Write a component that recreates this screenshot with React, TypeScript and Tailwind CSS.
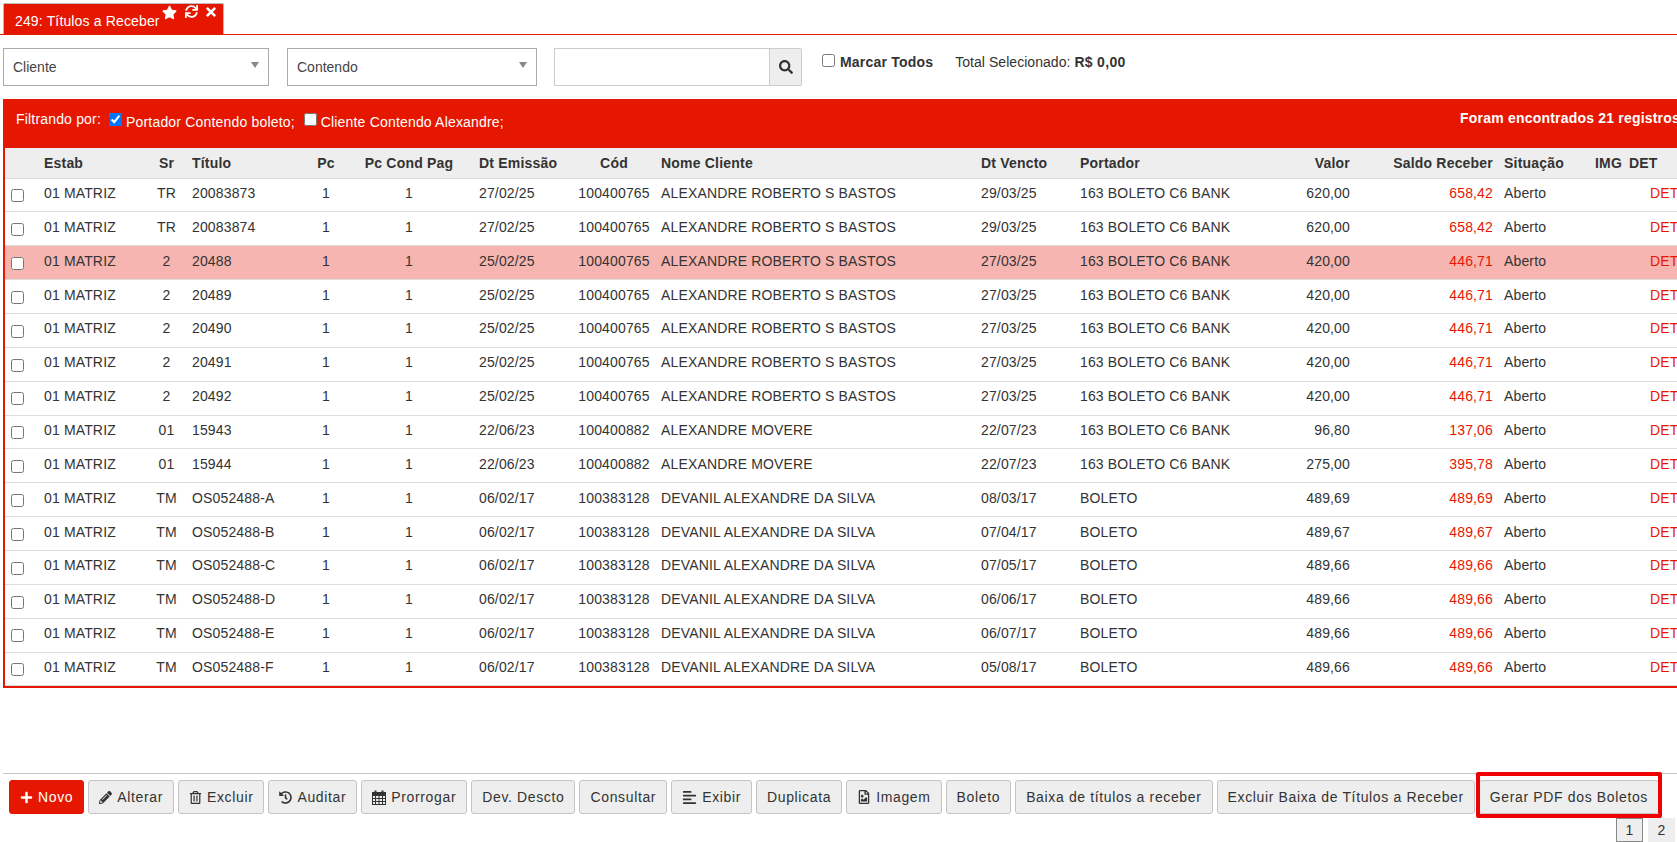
import { FaStar, FaSync, FaTimes, FaSearch, FaPlus, FaPencilAlt, FaRegTrashAlt, FaHistory, FaAlignLeft, FaRegFileImage } from "react-icons/fa"
import type { ReactNode } from "react"

const matriz = "01 MATRIZ"
const alex = "ALEXANDRE ROBERTO S BASTOS"
const dev = "DEVANIL ALEXANDRE DA SILVA"
const c6 = "163 BOLETO C6 BANK"

const rows = [
  ["TR", "20083873", "27/02/25", "100400765", alex, "29/03/25", c6, "620,00", "658,42"],
  ["TR", "20083874", "27/02/25", "100400765", alex, "29/03/25", c6, "620,00", "658,42"],
  ["2", "20488", "25/02/25", "100400765", alex, "27/03/25", c6, "420,00", "446,71"],
  ["2", "20489", "25/02/25", "100400765", alex, "27/03/25", c6, "420,00", "446,71"],
  ["2", "20490", "25/02/25", "100400765", alex, "27/03/25", c6, "420,00", "446,71"],
  ["2", "20491", "25/02/25", "100400765", alex, "27/03/25", c6, "420,00", "446,71"],
  ["2", "20492", "25/02/25", "100400765", alex, "27/03/25", c6, "420,00", "446,71"],
  ["01", "15943", "22/06/23", "100400882", "ALEXANDRE MOVERE", "22/07/23", c6, "96,80", "137,06"],
  ["01", "15944", "22/06/23", "100400882", "ALEXANDRE MOVERE", "22/07/23", c6, "275,00", "395,78"],
  ["TM", "OS052488-A", "06/02/17", "100383128", dev, "08/03/17", "BOLETO", "489,69", "489,69"],
  ["TM", "OS052488-B", "06/02/17", "100383128", dev, "07/04/17", "BOLETO", "489,67", "489,67"],
  ["TM", "OS052488-C", "06/02/17", "100383128", dev, "07/05/17", "BOLETO", "489,66", "489,66"],
  ["TM", "OS052488-D", "06/02/17", "100383128", dev, "06/06/17", "BOLETO", "489,66", "489,66"],
  ["TM", "OS052488-E", "06/02/17", "100383128", dev, "06/07/17", "BOLETO", "489,66", "489,66"],
  ["TM", "OS052488-F", "06/02/17", "100383128", dev, "05/08/17", "BOLETO", "489,66", "489,66"],
]

function Caret() {
  return <span className="w-0 h-0 border-l-[4px] border-r-[4px] border-t-[6px] border-l-transparent border-r-transparent border-t-[#888] mb-[4px]" />
}

// FontAwesome 4 style calendar, the react-icons one has no grid
function CalendarIcon() {
  return (
    <svg width="14" height="15" viewBox="0 0 14 15" fill="none" stroke="#333" strokeWidth="1">
      <rect x="0.5" y="2.5" width="13" height="12" fill="#eee" />
      <path d="M0.5 2.5h13v3h-13z" fill="#333" />
      <path d="M0.5 8.5h13M0.5 11.5h13M3.5 5.5v9M7 5.5v9M10.5 5.5v9" />
      <path d="M3.5 0.5v3M10.5 0.5v3" strokeWidth="2" />
    </svg>
  )
}

function Combo({ label, w }: { label: string; w: string }) {
  return (
    <div className={`${w} h-[38px] border border-[#aaa] bg-white flex items-center justify-between pl-[9px] pr-[9px] text-[14px] text-[#444]`}>
      <span>{label}</span>
      <Caret />
    </div>
  )
}

function Btn({ icon, children, red, mark }: { icon?: ReactNode; children: ReactNode; red?: boolean; mark?: boolean }) {
  return (
    <button
      className={`relative h-[34px] px-[10px] rounded-[3px] border flex items-center gap-[5px] text-[14px] tracking-[0.64px] whitespace-nowrap ${
        red ? "bg-[#e61700] border-[#e61700] text-white" : "bg-[#eeeeee] border-[#c4c4c4] text-[#333]"
      }`}
    >
      {icon}
      {children}
      {mark && <span className="absolute -left-[4px] -right-[4px] -top-[9px] -bottom-[5px] border-4 border-[#f00000] rounded-[2px]" />}
    </button>
  )
}

export default function App() {
  return (
    <div className="w-[1677px] h-[842px] overflow-hidden bg-white text-[#333] font-['Liberation_Sans',Arial,sans-serif]">
      <div className="h-[35px] pt-[3px] border-b border-[#e61700]">
        <div className="ml-[3px] w-[221px] h-[31px] bg-[#e61700] border border-b-0 border-[#bbb] rounded-t-[2px] flex items-start text-white pl-[11px] text-[14px]">
          <span className="mt-[7px] tracking-[0.15px]">249: Títulos a Receber</span>
          <FaStar className="ml-[2px] mt-[1px] text-[15px]" />
          <FaSync className="ml-[8px] mt-[1px] text-[13px]" />
          <FaTimes className="ml-[6px] mt-[1px] text-[14px]" />
        </div>
      </div>

      <div className="flex items-start mt-[13px] pl-[3px]">
        <Combo label="Cliente" w="w-[266px]" />
        <div className="w-[18px]" />
        <Combo label="Contendo" w="w-[250px]" />
        <div className="ml-[17px] flex">
          <div className="w-[216px] h-[38px] border border-[#ccc] bg-white" />
          <div className="w-[32px] h-[38px] border border-l-0 border-[#ccc] rounded-r-[2px] bg-[#eee] flex items-center justify-center">
            <FaSearch className="text-[14px] text-[#333]" />
          </div>
        </div>
        <label className="ml-[20px] mt-[4px] flex items-center gap-[5px] text-[14px] font-bold tracking-[0.2px]">
          <input type="checkbox" className="w-[13px] h-[13px] -mt-[4px]" />
          Marcar Todos
        </label>
        <div className="ml-[22px] mt-[4px] text-[14px] leading-[20px] tracking-[0.05px]">
          Total Selecionado: <b className="tracking-[0.3px]">R$ 0,00</b>
        </div>
      </div>

      <div className="ml-[3px] mt-[13px] w-[1700px] h-[49px] bg-[#e61700] text-white text-[14px] flex items-start tracking-[0.18px]">
        <span className="ml-[13px] mt-[10px]">Filtrando por:</span>
        <input type="checkbox" defaultChecked className="ml-[8px] mt-[14px] w-[13px] h-[13px]" />
        <span className="ml-[4px] mt-[13px]">Portador Contendo boleto;</span>
        <input type="checkbox" className="ml-[9px] mt-[14px] w-[13px] h-[13px]" />
        <span className="ml-[4px] mt-[13px]">Cliente Contendo Alexandre;</span>
        <b className="ml-auto mr-[23px] mt-[9px] whitespace-nowrap tracking-[0.2px]">Foram encontrados 21 registros</b>
      </div>

      <div className="ml-[3px] w-[1700px] border-l-2 border-b-2 border-[#e61700]">
        <table className="table-fixed border-collapse w-[1695px] text-[14px] tracking-[0.15px]">
          <colgroup>
            <col className="w-[34px]" />
            <col className="w-[107px]" />
            <col className="w-[41px]" />
            <col className="w-[121px]" />
            <col className="w-[36px]" />
            <col className="w-[130px]" />
            <col className="w-[98px]" />
            <col className="w-[84px]" />
            <col className="w-[320px]" />
            <col className="w-[99px]" />
            <col className="w-[225px]" />
            <col className="w-[55px]" />
            <col className="w-[144px]" />
            <col className="w-[91px]" />
            <col className="w-[36px]" />
            <col className="w-[74px]" />
          </colgroup>
          <thead>
            <tr className="h-[30px] bg-[#eee] border-b border-[#ddd] tracking-[0.2px] [&>th]:px-[5px] [&>th]:pt-[2px] [&>th]:whitespace-nowrap [&>th]:font-bold">
              <th></th>
              <th className="text-left">Estab</th>
              <th className="text-center">Sr</th>
              <th className="text-left">Título</th>
              <th className="text-center">Pc</th>
              <th className="text-center">Pc Cond Pag</th>
              <th className="text-left">Dt Emissão</th>
              <th className="text-center">Cód</th>
              <th className="text-left">Nome Cliente</th>
              <th className="text-left">Dt Vencto</th>
              <th className="text-left">Portador</th>
              <th className="text-right">Valor</th>
              <th className="text-right !pr-[6px]">Saldo Receber</th>
              <th className="text-left">Situação</th>
              <th className="text-center">IMG</th>
              <th className="text-left !pl-[3px]">DET</th>
            </tr>
          </thead>
          <tbody>
            {rows.map((r, i) => (
              <tr key={r[1]} className={`h-[33.86px] border-b border-[#ddd] [&>td]:px-[5px] [&>td]:pb-[3px] [&>td]:whitespace-nowrap ${i === 2 ? "bg-[#f6b5b0]" : "bg-white"}`}>
                <td className="text-left !pl-[6px] !pb-0">
                  <input type="checkbox" className="w-[13px] h-[13px] align-middle" />
                </td>
                <td>{matriz}</td>
                <td className="text-center">{r[0]}</td>
                <td>{r[1]}</td>
                <td className="text-center">1</td>
                <td className="text-center">1</td>
                <td>{r[2]}</td>
                <td className="text-center">{r[3]}</td>
                <td>{r[4]}</td>
                <td>{r[5]}</td>
                <td>{r[6]}</td>
                <td className="text-right">{r[7]}</td>
                <td className="text-right !pr-[6px] text-[#e61700]">{r[8]}</td>
                <td>Aberto</td>
                <td></td>
                <td className="text-[#e61700] !pl-[24px]">DET</td>
              </tr>
            ))}
          </tbody>
        </table>
      </div>

      <div className="ml-[3px] mt-[85px] border-t border-[#c4c4c4] pt-[6px] pl-[6px] flex gap-[4px]">
        <Btn red icon={<FaPlus className="text-[13px]" />}>Novo</Btn>
        <Btn icon={<FaPencilAlt className="text-[13px]" />}>Alterar</Btn>
        <Btn icon={<FaRegTrashAlt className="text-[13px]" />}>Excluir</Btn>
        <Btn icon={<FaHistory className="text-[13px]" />}>Auditar</Btn>
        <Btn icon={<CalendarIcon />}>Prorrogar</Btn>
        <Btn>Dev. Descto</Btn>
        <Btn>Consultar</Btn>
        <Btn icon={<FaAlignLeft className="text-[15px]" />}>Exibir</Btn>
        <Btn>Duplicata</Btn>
        <Btn icon={<FaRegFileImage className="text-[14px]" />}>Imagem</Btn>
        <Btn>Boleto</Btn>
        <Btn>Baixa de títulos a receber</Btn>
        <Btn>Excluir Baixa de Títulos a Receber</Btn>
        <Btn mark>Gerar PDF dos Boletos</Btn>
      </div>

      <div className="flex justify-end gap-[5px] mt-[4px] pr-[2px] text-[14px]">
        <span className="w-[27px] h-[24px] border border-[#888] bg-[#eee] flex items-center justify-center">1</span>
        <span className="w-[27px] h-[24px] bg-[#eee] flex items-center justify-center">2</span>
      </div>
    </div>
  )
}
